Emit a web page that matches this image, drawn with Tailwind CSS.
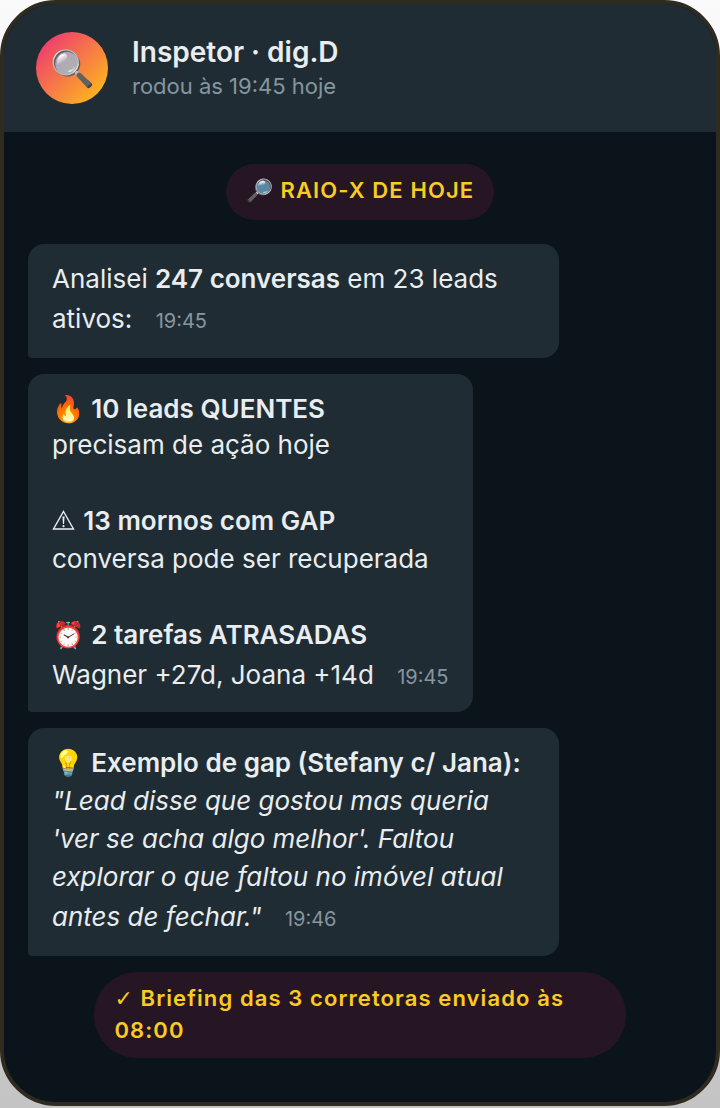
<!DOCTYPE html>
<html lang="pt-BR">
<head>
  <meta charset="UTF-8" />
  <meta name="viewport" content="width=device-width, initial-scale=1.0"/>
  <title>Inspetor · dig.D</title>
  <script src="https://cdn.jsdelivr.net/npm/@tailwindcss/browser@4"></script>
</head>
<body class="bg-linear-to-b from-[#fafafa] to-[#c4c4c4] min-h-screen font-['Inter',sans-serif] text-[#e9edef]">

  <div class="flex flex-col border-4 border-[#2f2b20] rounded-[56px] overflow-hidden bg-[#0b141a]">

    <!-- Header -->
    <header class="flex items-center gap-6 bg-[#202c33] px-8 py-7">
      <div class="flex items-center justify-center size-18 shrink-0 rounded-full bg-[linear-gradient(135deg,#ed2a7b,#ffc812)] text-[36px]">🔍</div>
      <div>
        <h1 class="text-[28px] leading-9 font-semibold">Inspetor · dig.D</h1>
        <p class="text-[22px] leading-8 text-[#8696a0]">rodou às 19:45 hoje</p>
      </div>
    </header>

    <!-- Conversation -->
    <main class="flex flex-col items-start gap-4 px-6 pt-8 pb-11">
      <div class="self-center rounded-full bg-[#261623] px-5 pt-[10px] pb-[14px] mb-2 text-[22px] leading-8 font-semibold tracking-wider text-[#facc22]">🔎 RAIO-X DE HOJE</div>

      <div class="max-w-4/5 rounded-2xl rounded-bl-sm bg-[#202c33] px-6 py-4 text-[26px] leading-[38px]">
        Analisei <strong class="font-semibold">247 conversas</strong> em 23 leads ativos:
        <time class="inline-block ml-4 mt-1 mb-[2px] text-[20px] text-[#8696a0]">19:45</time>
      </div>

      <div class="max-w-4/5 rounded-2xl rounded-bl-sm bg-[#202c33] px-6 py-4 text-[26px] leading-[38px]">
        <span class="block h-9">🔥 <strong class="font-semibold">10 leads QUENTES</strong></span>
        precisam de ação hoje<br><br>
        <svg class="inline-block w-6 h-5 align-baseline" viewBox="0 0 24 20" fill="none" stroke="currentColor" stroke-width="1.4" aria-label="Atenção"><path d="M11.5 1.5 L21.5 19 H1.5 Z"/><path d="M10.4 6.5 H12.6 L12 14 H11 Z" fill="currentColor" stroke="none"/><circle cx="11.5" cy="16.2" r="1.1" fill="currentColor" stroke="none"/></svg>
        <strong class="font-semibold">13 mornos com GAP</strong><br>
        conversa pode ser recuperada<br><br>
        ⏰ <strong class="font-semibold">2 tarefas ATRASADAS</strong><br>
        Wagner +27d, Joana +14d
        <time class="inline-block ml-4 mt-1 text-[20px] text-[#8696a0]">19:45</time>
      </div>

      <div class="max-w-4/5 rounded-2xl rounded-bl-sm bg-[#202c33] px-6 py-4 text-[26px] leading-[38px]">
        💡 <strong class="font-semibold">Exemplo de gap (Stefany c/ Jana):</strong><br>
        <em>"Lead disse que gostou mas queria 'ver se acha algo melhor'. Faltou explorar o que faltou no imóvel atual antes de fechar."</em>
        <time class="inline-block ml-4 mt-1 mb-[2px] text-[20px] text-[#8696a0]">19:46</time>
      </div>

      <div class="self-center max-w-4/5 rounded-[44px] bg-[#261623] px-5 pt-[10px] pb-3 text-[22px] leading-8 font-semibold tracking-wider text-[#facc22]"><span class="font-['DejaVu_Sans',sans-serif] font-bold leading-none">✓</span> Briefing das 3 corretoras enviado às 08:00</div>
    </main>
  </div>

</body>
</html>
